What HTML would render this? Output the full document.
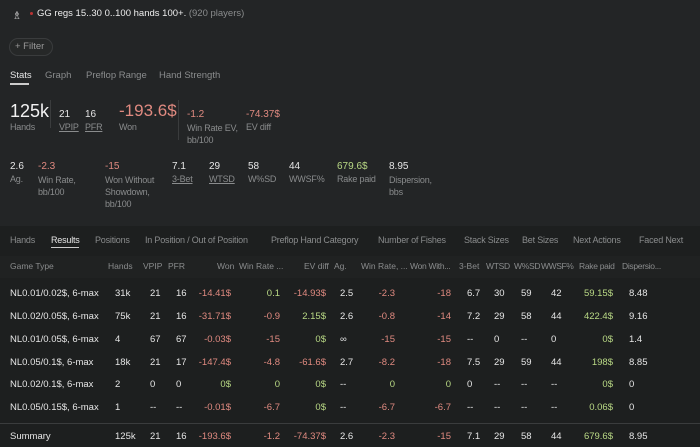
<!DOCTYPE html>
<html><head><meta charset="utf-8"><style>
*{margin:0;padding:0;box-sizing:border-box}
body{width:700px;height:447px;overflow:hidden;background:#232526;font-family:"Liberation Sans",sans-serif;color:#e6e6e6;position:relative;font-size:9.5px}
.a{position:absolute;white-space:nowrap}
.g{color:#8a8c8d}
.r{color:#e08a80}
.gr{color:#b9d985}
.u{text-decoration:underline}
.low{position:absolute;left:0;top:226px;width:700px;height:221px;background:#1d1f1f}
.hdr{position:absolute;left:0;top:256px;width:700px;height:22px;background:#202222}
.s{font-size:9px;letter-spacing:-0.2px}
</style></head><body>
<div class="a" style="left:12px;top:9px;font-size:11px;color:#ccc">♗</div>
<div class="a" style="left:30px;top:12px;width:3px;height:3px;border-radius:50%;background:#b33"></div>
<div class="a" style="left:37px;top:8px;font-size:9.5px;color:#eee">GG regs 15..30 0..100 hands 100+. <span class="g">(920 players)</span></div>
<div class="a" style="left:9px;top:38px;width:44px;height:18px;border:1px solid #3a3c3d;border-radius:9px;background:#262828"></div>
<div class="a g" style="left:15px;top:41px;font-size:9.5px;color:#999">+ Filter</div>
<div class="a" style="left:10px;top:70px;font-size:9.5px">Stats</div>
<div class="a" style="left:10px;top:83px;width:19px;height:2px;background:#ccc"></div>
<div class="a g" style="left:45px;top:70px;font-size:9.5px">Graph</div>
<div class="a g" style="left:86px;top:70px;font-size:9.5px">Preflop Range</div>
<div class="a g" style="left:159px;top:70px;font-size:9.5px">Hand Strength</div>

<div class="a" style="left:10px;top:101px;font-size:18px;color:#f2f2f2">125k</div>
<div class="a g s" style="left:10px;top:122px">Hands</div>
<div class="a" style="left:50px;top:100px;width:1px;height:28px;background:#3a3c3d"></div>
<div class="a" style="left:59px;top:109px;font-size:10px">21</div>
<div class="a g u s" style="left:59px;top:122px">VPIP</div>
<div class="a" style="left:85px;top:109px;font-size:10px">16</div>
<div class="a g u s" style="left:85px;top:122px">PFR</div>
<div class="a r" style="left:119px;top:101px;font-size:17px">-193.6$</div>
<div class="a g s" style="left:119px;top:122px">Won</div>
<div class="a" style="left:178px;top:100px;width:1px;height:40px;background:#3a3c3d"></div>
<div class="a r" style="left:187px;top:109px;font-size:10px">-1.2</div>
<div class="a g s" style="left:187px;top:122px;line-height:12px">Win Rate EV,<br>bb/100</div>
<div class="a r" style="left:246px;top:109px;font-size:10px">-74.37$</div>
<div class="a g s" style="left:246px;top:122px">EV diff</div>

<div class="a" style="left:10px;top:161px;font-size:10px">2.6</div>
<div class="a g s" style="left:10px;top:174px">Ag.</div>
<div class="a r" style="left:38px;top:161px;font-size:10px">-2.3</div>
<div class="a g s" style="left:38px;top:174px;line-height:12px">Win Rate,<br>bb/100</div>
<div class="a r" style="left:105px;top:161px;font-size:10px">-15</div>
<div class="a g s" style="left:105px;top:174px;line-height:12px">Won Without<br>Showdown,<br>bb/100</div>
<div class="a" style="left:172px;top:161px;font-size:10px">7.1</div>
<div class="a g u s" style="left:172px;top:174px">3-Bet</div>
<div class="a" style="left:209px;top:161px;font-size:10px">29</div>
<div class="a g u s" style="left:209px;top:174px">WTSD</div>
<div class="a" style="left:248px;top:161px;font-size:10px">58</div>
<div class="a g s" style="left:248px;top:174px">W%SD</div>
<div class="a" style="left:289px;top:161px;font-size:10px">44</div>
<div class="a g s" style="left:289px;top:174px">WWSF%</div>
<div class="a gr" style="left:337px;top:161px;font-size:10px">679.6$</div>
<div class="a g s" style="left:337px;top:174px">Rake paid</div>
<div class="a" style="left:389px;top:161px;font-size:10px">8.95</div>
<div class="a g s" style="left:389px;top:174px;line-height:12px">Dispersion,<br>bbs</div>

<div class="low"></div>
<div class="hdr"></div>
<div class="a g s" style="left:10px;top:235px">Hands</div>
<div class="a s" style="left:51px;top:235px">Results</div>
<div class="a" style="left:51px;top:247px;width:28px;height:1px;background:#ccc"></div>
<div class="a g s" style="left:95px;top:235px">Positions</div>
<div class="a g s" style="left:145px;top:235px">In Position / Out of Position</div>
<div class="a g s" style="left:271px;top:235px">Preflop Hand Category</div>
<div class="a g s" style="left:378px;top:235px">Number of Fishes</div>
<div class="a g s" style="left:464px;top:235px">Stack Sizes</div>
<div class="a g s" style="left:522px;top:235px">Bet Sizes</div>
<div class="a g s" style="left:573px;top:235px">Next Actions</div>
<div class="a g s" style="left:639px;top:235px">Faced Next</div>

<div class="a g" style="left:10px;top:261px;font-size:8.5px">Game Type</div>
<div class="a g" style="left:108px;top:261px;font-size:8.5px">Hands</div>
<div class="a g" style="left:143px;top:261px;font-size:8.5px">VPIP</div>
<div class="a g" style="left:168px;top:261px;font-size:8.5px">PFR</div>
<div class="a g" style="left:217px;top:261px;font-size:8.5px">Won</div>
<div class="a g" style="left:239px;top:261px;font-size:8.5px">Win Rate ...</div>
<div class="a g" style="left:304px;top:261px;font-size:8.5px">EV diff</div>
<div class="a g" style="left:334px;top:261px;font-size:8.5px">Ag.</div>
<div class="a g" style="left:361px;top:261px;font-size:8.5px">Win Rate, ...</div>
<div class="a g" style="left:410px;top:261px;font-size:8.5px;letter-spacing:-0.3px">Won With...</div>
<div class="a g" style="left:459px;top:261px;font-size:8.5px">3-Bet</div>
<div class="a g" style="left:486px;top:261px;font-size:8.5px;letter-spacing:-0.3px">WTSD</div>
<div class="a g" style="left:514px;top:261px;font-size:8.5px;letter-spacing:-0.3px">W%SD</div>
<div class="a g" style="left:541px;top:261px;font-size:8.5px;letter-spacing:-0.4px">WWSF%</div>
<div class="a g" style="left:579px;top:261px;font-size:8.5px;letter-spacing:-0.3px">Rake paid</div>
<div class="a g" style="left:622px;top:261px;font-size:8.5px;letter-spacing:-0.3px">Dispersio...</div>

<div class="a" style="left:0;top:423px;width:700px;height:1px;background:#3a3c3d"></div>

<div id="rows"></div>
<script>
var rows=[
["NL0.01/0.02$, 6-max","31k","21","16",["r","-14.41$"],["gr","0.1"],["r","-14.93$"],"2.5",["r","-2.3"],["r","-18"],"6.7","30","59","42",["gr","59.15$"],"8.48",288],
["NL0.02/0.05$, 6-max","75k","21","16",["r","-31.71$"],["r","-0.9"],["gr","2.15$"],"2.6",["r","-0.8"],["r","-14"],"7.2","29","58","44",["gr","422.4$"],"9.16",311],
["NL0.01/0.05$, 6-max","4","67","67",["r","-0.03$"],["r","-15"],["gr","0$"],"∞",["r","-15"],["r","-15"],"--","0","--","0",["gr","0$"],"1.4",334],
["NL0.05/0.1$, 6-max","18k","21","17",["r","-147.4$"],["r","-4.8"],["r","-61.6$"],"2.7",["r","-8.2"],["r","-18"],"7.5","29","59","44",["gr","198$"],"8.85",357],
["NL0.02/0.1$, 6-max","2","0","0",["gr","0$"],["gr","0"],["gr","0$"],"--",["gr","0"],["gr","0"],"0","--","--","--",["gr","0$"],"0",379],
["NL0.05/0.15$, 6-max","1","--","--",["r","-0.01$"],["r","-6.7"],["gr","0$"],"--",["r","-6.7"],["r","-6.7"],"--","--","--","--",["gr","0.06$"],"0",402],
["Summary","125k","21","16",["r","-193.6$"],["r","-1.2"],["r","-74.37$"],"2.6",["r","-2.3"],["r","-15"],"7.1","29","58","44",["gr","679.6$"],"8.95",431]];
var h="";
function L(x,y,t,c){h+='<div class="a '+(c||'')+'" style="left:'+x+'px;top:'+y+'px">'+t+'</div>';}
function R(x,y,t,c){h+='<div class="a '+(c||'')+'" style="right:'+(700-x)+'px;top:'+y+'px">'+t+'</div>';}
rows.forEach(function(r){var y=r[16];
L(10,y,r[0]);L(115,y,r[1]);L(150,y,r[2]);L(176,y,r[3]);
R(231,y,r[4][1],r[4][0]);R(280,y,r[5][1],r[5][0]);R(326,y,r[6][1],r[6][0]);
L(340,y,r[7]);R(395,y,r[8][1],r[8][0]);R(451,y,r[9][1],r[9][0]);
L(467,y,r[10]);L(494,y,r[11]);L(521,y,r[12]);L(551,y,r[13]);
R(613,y,r[14][1],r[14][0]);L(629,y,r[15]);});
document.getElementById("rows").innerHTML=h;
</script>
</body></html>
